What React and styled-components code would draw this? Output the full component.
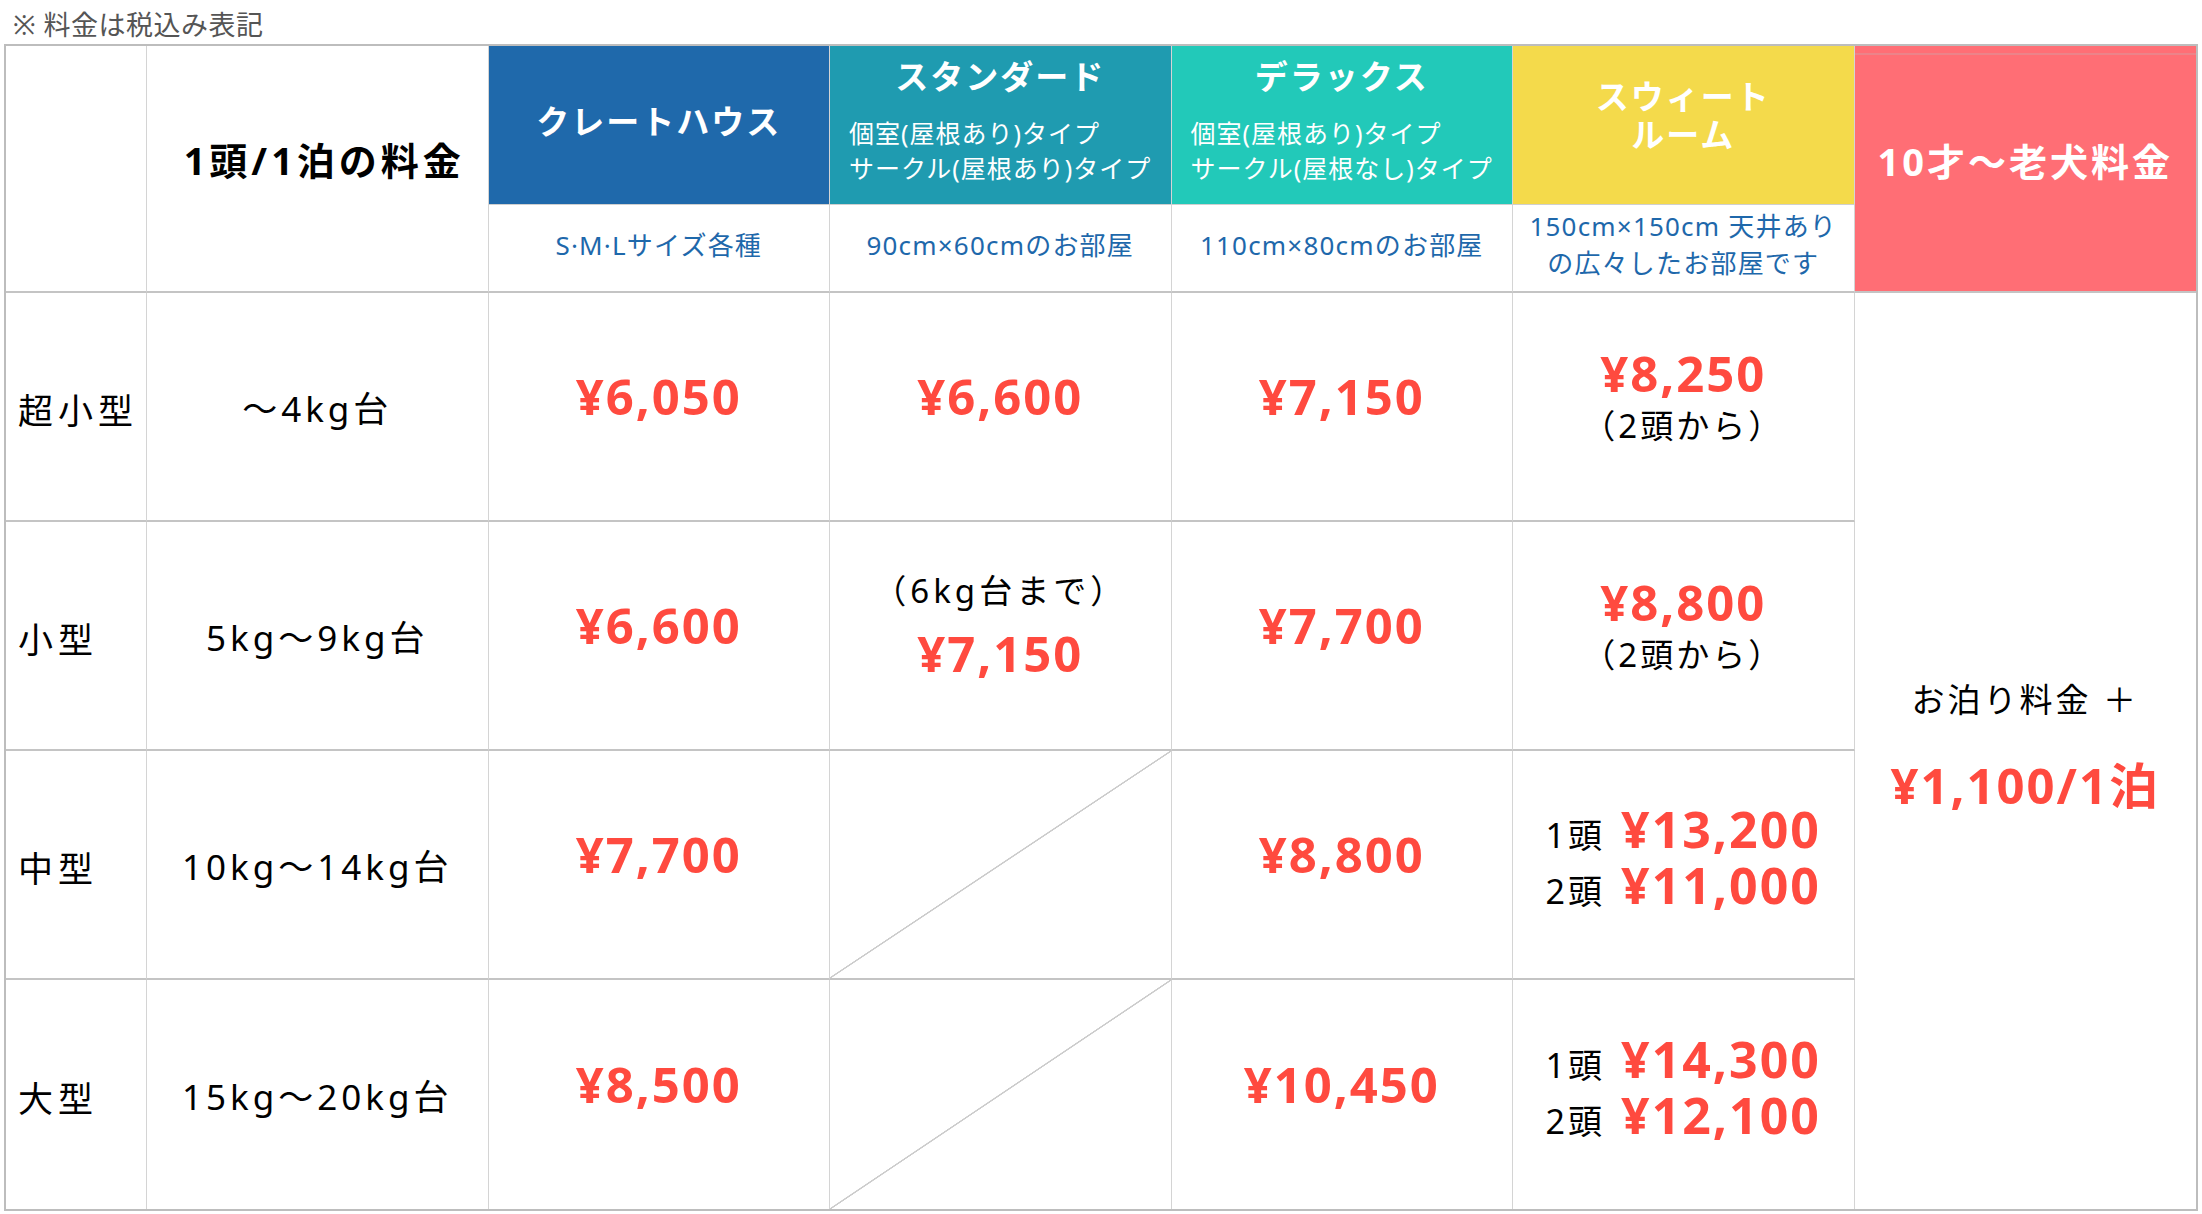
import React from 'react';
import styled, { createGlobalStyle } from 'styled-components';

const Global = createGlobalStyle`
  html, body { margin: 0; padding: 0; background: #fff; }
  body { font-family: "Noto Sans", "Noto Sans CJK JP", sans-serif; color: #111; }
  * { box-sizing: border-box; }
`;

const Page = styled.div`
  width: 2202px;
  padding: 0 4px;
`;

const Note = styled.div`
  height: 44px;
  display: flex;
  align-items: center;
  padding-left: 9px;
  padding-top: 2px;
  font-size: 27px;
  color: #555;
  letter-spacing: 0.5px;
`;

const Table = styled.div`
  display: grid;
  grid-template-columns: 141px repeat(6, 1fr);
  grid-template-rows: 159px 88px repeat(4, 229px);
  border: 2px solid #bdbdbd;
  width: 2194px;
`;

const Cell = styled.div`
  grid-row: ${(p) => (p.$rows ? `span ${p.$rows}` : 'auto')};
  display: flex;
  flex-direction: column;
  align-items: ${(p) => (p.$left ? 'flex-start' : 'center')};
  justify-content: center;
  padding: ${(p) => p.$pad || '0 10px'};
  background: ${(p) => p.$bg || '#fff'};
  border-right: ${(p) => (p.$last ? 'none' : '1px solid #d4d4d4')};
  border-bottom: ${(p) =>
    p.$bottom === 'none' ? 'none' : p.$bottom === 'thin' ? '1px solid #cfcfcf' : '2px solid #c4c4c4'};
`;

const SlashCell = styled(Cell)`
  background: linear-gradient(
    to bottom right,
    transparent calc(50% - 1px),
    #cccccc calc(50% - 0.5px),
    #cccccc calc(50% + 0.5px),
    transparent calc(50% + 1px)
  );
`;

const SeniorHead = styled(Cell)`
  background: linear-gradient(
    to bottom,
    #ff6e75 7px,
    #ec8389 7px,
    #ec8389 9px,
    #ff6e75 9px
  );
`;

const PerNight = styled.div`
  font-size: 38px;
  font-weight: 700;
  letter-spacing: 4px;
  color: #000;
  margin: -20px 0 0 14px;
`;

const HeadTitle = styled.div`
  font-size: ${(p) => p.$size || 33}px;
  font-weight: 700;
  letter-spacing: ${(p) => p.$spacing || 2}px;
  line-height: 38px;
  color: #fff;
  text-align: center;
`;

const SubList = styled.div`
  margin-top: 20px;
  font-size: 25px;
  line-height: 35px;
  color: #fff;
  text-align: left;
  letter-spacing: 1px;
  white-space: nowrap;
`;

const Spec = styled.div`
  font-size: 26px;
  line-height: 37px;
  color: #1e68ab;
  text-align: center;
  letter-spacing: 1.2px;
`;

const Label = styled.div`
  font-size: 35px;
  letter-spacing: 5px;
  color: #000;
`;

const Weight = styled.div`
  font-size: 35px;
  letter-spacing: 4px;
  color: #000;
`;

const Price = styled.div`
  font-size: 49px;
  font-weight: 700;
  color: #ff4a3f;
  line-height: 1.2;
  letter-spacing: 2px;
`;

const Remark = styled.div`
  font-size: 33px;
  color: #000;
  line-height: 1.4;
  letter-spacing: ${(p) => p.$spacing || 3}px;
  margin-bottom: ${(p) => p.$gap || 0}px;
`;

const Dual = styled.div`
  display: flex;
  align-items: baseline;
  gap: 16px;
  height: 56px;
  line-height: 1.1;
`;

const Heads = styled.span`
  font-size: 34px;
  letter-spacing: 3px;
  color: #000;
`;

const DualPrice = styled.span`
  font-size: 50px;
  font-weight: 700;
  color: #ff4a3f;
  letter-spacing: 2px;
`;

const SeniorText = styled.div`
  font-size: 33px;
  color: #000;
  letter-spacing: 3px;
  margin-bottom: 34px;
`;

const rows = [
  {
    label: '超小型',
    weight: '～4kg台',
    crate: '¥6,050',
    std: { price: '¥6,600' },
    dx: '¥7,150',
    sweet: { price: '¥8,250', note: '（2頭から）' },
  },
  {
    label: '小型',
    weight: '5kg～9kg台',
    crate: '¥6,600',
    std: { price: '¥7,150', pre: '（6kg台まで）' },
    dx: '¥7,700',
    sweet: { price: '¥8,800', note: '（2頭から）' },
  },
  {
    label: '中型',
    weight: '10kg～14kg台',
    crate: '¥7,700',
    std: null,
    dx: '¥8,800',
    sweet: { one: '¥13,200', two: '¥11,000' },
  },
  {
    label: '大型',
    weight: '15kg～20kg台',
    crate: '¥8,500',
    std: null,
    dx: '¥10,450',
    sweet: { one: '¥14,300', two: '¥12,100' },
  },
];

const PRICE_PAD = '0 10px 20px';
const DUAL_PAD = '0 10px 14px';
const LABEL_PAD = '4px 0 0 12px';
const WEIGHT_PAD = '0 10px';

export default function App() {
  return (
    <Page>
      <Global />
      <Note>※ 料金は税込み表記</Note>
      <Table>
        <Cell $rows={2} />
        <Cell $rows={2}>
          <PerNight>1頭/1泊の料金</PerNight>
        </Cell>
        <Cell $bg="#1f69ab" $bottom="thin" $pad="0 10px 6px">
          <HeadTitle>クレートハウス</HeadTitle>
        </Cell>
        <Cell $bg="#1f9bb0" $bottom="thin" $pad="0 10px 6px">
          <HeadTitle>スタンダード</HeadTitle>
          <SubList>
            個室(屋根あり)タイプ
            <br />
            サークル(屋根あり)タイプ
          </SubList>
        </Cell>
        <Cell $bg="#22c9b9" $bottom="thin" $pad="0 10px 6px">
          <HeadTitle>デラックス</HeadTitle>
          <SubList>
            個室(屋根あり)タイプ
            <br />
            サークル(屋根なし)タイプ
          </SubList>
        </Cell>
        <Cell $bg="#f4da4b" $bottom="thin" $pad="0 10px 18px">
          <HeadTitle>
            スウィート
            <br />
            ルーム
          </HeadTitle>
        </Cell>
        <SeniorHead $rows={2} $last $pad="0 10px 16px">
          <HeadTitle $size={38} $spacing={3}>10才～老犬料金</HeadTitle>
        </SeniorHead>

        <Cell $pad="0 10px 6px">
          <Spec>S·M·Lサイズ各種</Spec>
        </Cell>
        <Cell $pad="0 10px 6px">
          <Spec>90cm×60cmのお部屋</Spec>
        </Cell>
        <Cell $pad="0 10px 6px">
          <Spec>110cm×80cmのお部屋</Spec>
        </Cell>
        <Cell $pad="0 10px 6px">
          <Spec>
            150cm×150cm 天井あり
            <br />
            の広々したお部屋です
          </Spec>
        </Cell>

        {rows.map((r, i) => {
          const lastRow = i === rows.length - 1;
          const b = lastRow ? 'none' : undefined;
          return (
            <React.Fragment key={r.label}>
              <Cell $left $bottom={b} $pad={LABEL_PAD}>
                <Label>{r.label}</Label>
              </Cell>
              <Cell $bottom={b} $pad={WEIGHT_PAD}>
                <Weight>{r.weight}</Weight>
              </Cell>
              <Cell $bottom={b} $pad={PRICE_PAD}>
                <Price>{r.crate}</Price>
              </Cell>
              {r.std ? (
                <Cell $bottom={b} $pad={PRICE_PAD}>
                  {r.std.pre && (
                    <Remark $gap={10} $spacing={4}>
                      {r.std.pre}
                    </Remark>
                  )}
                  <Price>{r.std.price}</Price>
                </Cell>
              ) : (
                <SlashCell $bottom={b} />
              )}
              <Cell $bottom={b} $pad={PRICE_PAD}>
                <Price>{r.dx}</Price>
              </Cell>
              <Cell $bottom={b} $pad={r.sweet.price ? PRICE_PAD : DUAL_PAD}>
                {r.sweet.price ? (
                  <>
                    <Price>{r.sweet.price}</Price>
                    <Remark>{r.sweet.note}</Remark>
                  </>
                ) : (
                  <>
                    <Dual>
                      <Heads>1頭</Heads>
                      <DualPrice>{r.sweet.one}</DualPrice>
                    </Dual>
                    <Dual>
                      <Heads>2頭</Heads>
                      <DualPrice>{r.sweet.two}</DualPrice>
                    </Dual>
                  </>
                )}
              </Cell>
              {i === 0 && (
                <Cell $rows={4} $last $bottom="none" $pad="0 10px 14px">
                  <SeniorText>お泊り料金 ＋</SeniorText>
                  <Price>¥1,100/1泊</Price>
                </Cell>
              )}
            </React.Fragment>
          );
        })}
      </Table>
    </Page>
  );
}
